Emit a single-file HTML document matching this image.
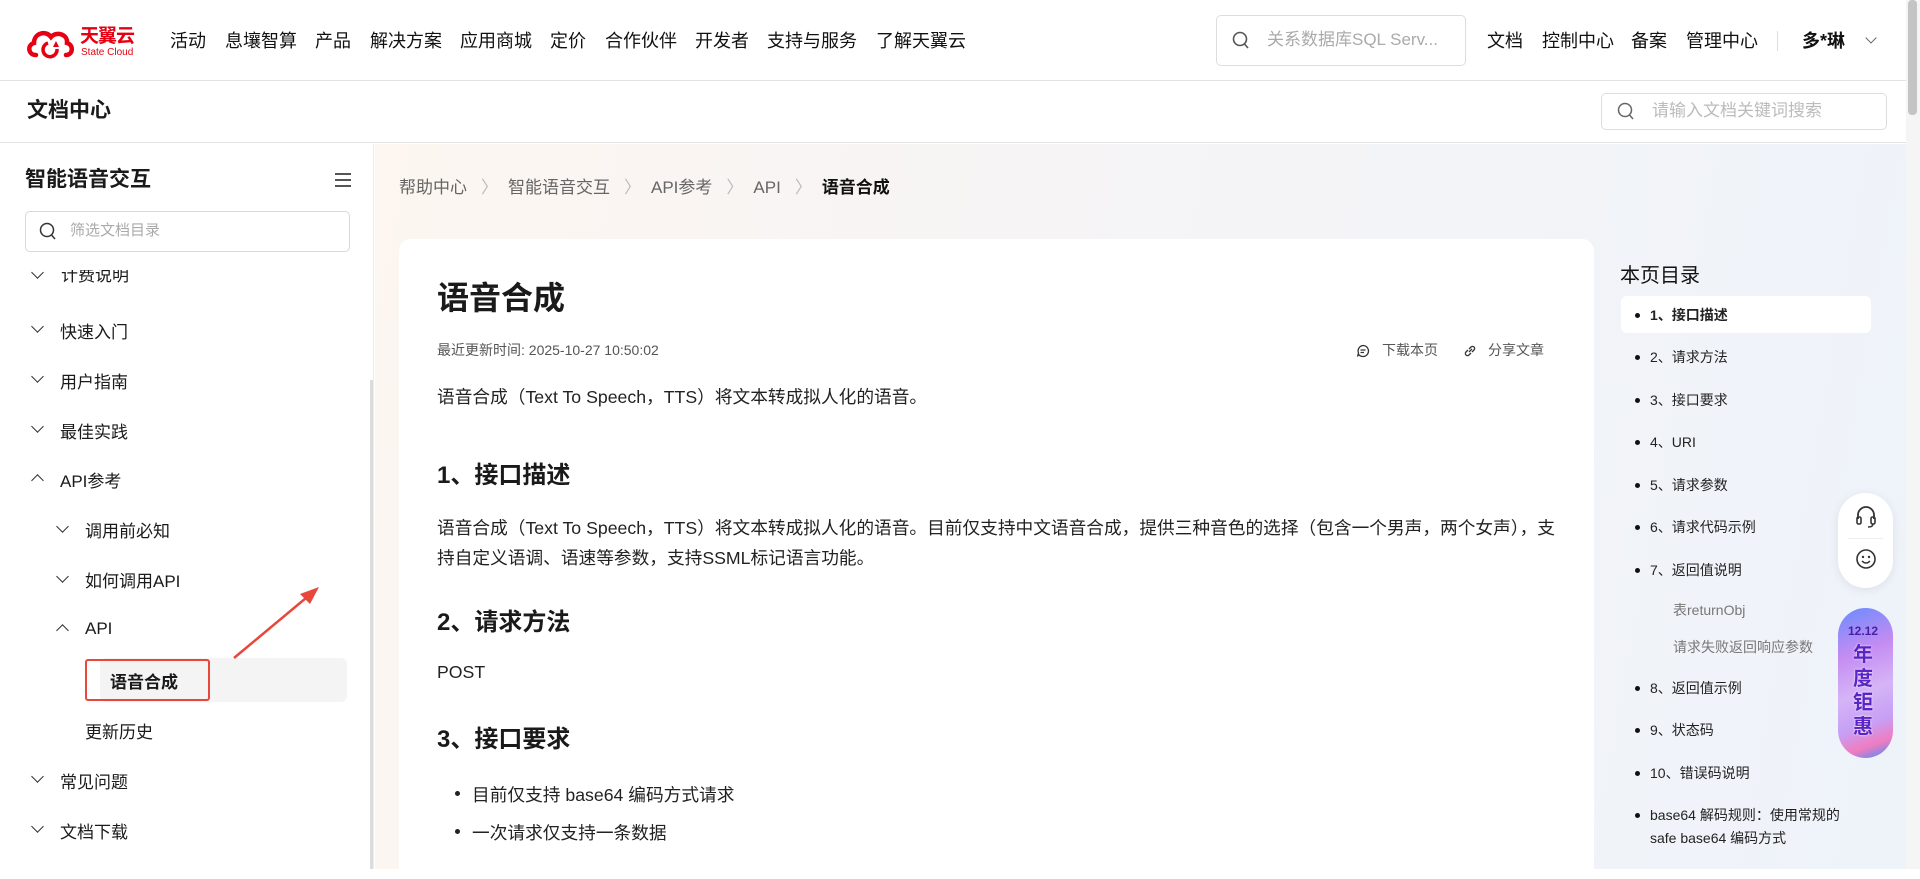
<!DOCTYPE html>
<html><head><meta charset="utf-8">
<style>
*{margin:0;padding:0;box-sizing:border-box}
body{width:1920px;height:869px;overflow:hidden;position:relative;font-family:"Liberation Sans","Noto Sans CJK SC",sans-serif;color:#1a1a1a;background:#fff}
.a{position:absolute;white-space:nowrap}
.nav{top:27px;font-size:18px;color:#111}
.sb{font-size:17px;color:#1a1a1a}
.chev{position:absolute;width:9px;height:9px;border-right:1.5px solid #333;border-bottom:1.5px solid #333}
.dn{transform:rotate(45deg)}
.up{transform:rotate(-135deg)}
.toc{font-size:14px;color:#222}
.toc::before{content:"";position:absolute;left:-15px;top:8px;width:5px;height:5px;border-radius:50%;background:#111}
.p{font-size:17.7px;color:#222}
h2{position:absolute;font-size:24px;font-weight:bold;color:#1a1a1a;white-space:nowrap}
</style></head><body>
<!-- header -->
<div class="a" style="left:0;top:0;width:1920px;height:81px;border-bottom:1px solid #e2e2e2;background:#fff"></div>
<svg class="a" style="left:26px;top:27px" width="50" height="32" viewBox="0 0 50 32"><path d="M10 28 C2 28 1 18 8 16 C8 6 20 3 25 10 C30 4 42 7 41 16 C48 18 47 28 40 28" fill="none" stroke="#e60012" stroke-width="4.5" stroke-linecap="round"/><path d="M22 16 A7 7 0 1 0 31 22" fill="none" stroke="#e60012" stroke-width="3.5"/><path d="M30 14 l3 6 l-6 0z" fill="#e60012"/></svg>
<div class="a" style="left:80px;top:26px;font-size:19px;line-height:22px;font-weight:bold;color:#e60012;letter-spacing:-1px">天翼云</div>
<div class="a" style="left:81px;top:47px;font-size:10px;line-height:11px;color:#e60012">State Cloud</div>
<div class="a nav" style="left:170px">活动</div>
<div class="a nav" style="left:225px">息壤智算</div>
<div class="a nav" style="left:315px">产品</div>
<div class="a nav" style="left:370px">解决方案</div>
<div class="a nav" style="left:460px">应用商城</div>
<div class="a nav" style="left:550px">定价</div>
<div class="a nav" style="left:605px">合作伙伴</div>
<div class="a nav" style="left:695px">开发者</div>
<div class="a nav" style="left:767px">支持与服务</div>
<div class="a nav" style="left:876px">了解天翼云</div>
<div class="a" style="left:1216px;top:15px;width:250px;height:51px;border:1px solid #ddd;border-radius:5px"></div>
<svg class="a" style="left:1232px;top:31px" width="18" height="20"><circle cx="8" cy="8" r="6.5" fill="none" stroke="#555" stroke-width="1.6"/><path d="M12.5 13 L16 17" stroke="#555" stroke-width="1.6"/></svg>
<div class="a" style="left:1267px;top:30px;font-size:17px;line-height:20px;color:#aaa">关系数据库SQL Serv...</div>
<div class="a nav" style="left:1487px">文档</div>
<div class="a nav" style="left:1542px">控制中心</div>
<div class="a nav" style="left:1631px">备案</div>
<div class="a nav" style="left:1686px">管理中心</div>
<div class="a" style="left:1777px;top:31px;width:1px;height:20px;background:#ddd"></div>
<div class="a nav" style="left:1802px;font-weight:bold">多*琳</div>
<div class="chev dn" style="left:1867px;top:34px;width:8px;height:8px;border-color:#666;border-width:1.2px"></div>
<div class="a" style="left:1906px;top:0;width:14px;height:869px;background:#f5f5f5"></div>
<div class="a" style="left:1908px;top:0;width:9px;height:115px;background:#c4c4c4;border-radius:4px"></div>
<!-- subbar -->
<div class="a" style="left:0;top:81px;width:1906px;height:62px;border-bottom:1px solid #e2e2e2;background:#fff"></div>
<div class="a" style="left:27px;top:99px;font-size:21px;line-height:24px;font-weight:bold">文档中心</div>
<div class="a" style="left:1601px;top:93px;width:286px;height:37px;border:1px solid #ddd;border-radius:5px"></div>
<svg class="a" style="left:1617px;top:102px" width="18" height="20"><circle cx="8" cy="8" r="6.5" fill="none" stroke="#666" stroke-width="1.5"/><path d="M12.5 13 L16 17" stroke="#666" stroke-width="1.5"/></svg>
<div class="a" style="left:1652px;top:101px;font-size:17px;line-height:20px;color:#bbb">请输入文档关键词搜索</div>
<!-- main bg -->
<div class="a" style="left:375px;top:144px;width:1531px;height:725px;background:linear-gradient(100deg,#fdf6f1 0%,#f6f4f5 40%,#eef3fa 100%)"></div>
<!-- sidebar -->
<div class="a" style="left:0;top:144px;width:374px;height:725px;background:#fff;border-right:1px solid #ececec"></div>
<div class="a" style="left:370px;top:380px;width:3px;height:489px;background:#dcdcdc"></div>
<div class="a" style="left:25px;top:168px;font-size:21px;line-height:24px;font-weight:bold">智能语音交互</div>
<div class="a" style="left:335px;top:173px;width:16px;height:2px;background:#555;box-shadow:0 6px 0 #555,0 12px 0 #555"></div>
<div class="a" style="left:25px;top:211px;width:325px;height:41px;border:1px solid #d8d8d8;border-radius:5px"></div>
<svg class="a" style="left:39px;top:222px" width="18" height="20"><circle cx="8" cy="8" r="6.5" fill="none" stroke="#333" stroke-width="1.5"/><path d="M12.5 13 L16 17" stroke="#333" stroke-width="1.5"/></svg>
<div class="a" style="left:70px;top:222px;font-size:15px;line-height:18px;color:#aaa">筛选文档目录</div>
<div class="a" style="left:0;top:270px;width:370px;height:22px;overflow:hidden"><div class="a sb" style="left:61px;top:-4px;line-height:20px">计费说明</div><div class="chev dn" style="left:33px;top:-2px"></div></div>
<div class="chev dn" style="left:33px;top:322px"></div><div class="a sb" style="left:60px;top:318px">快速入门</div>
<div class="chev dn" style="left:33px;top:372px"></div><div class="a sb" style="left:60px;top:368px">用户指南</div>
<div class="chev dn" style="left:33px;top:422px"></div><div class="a sb" style="left:60px;top:418px">最佳实践</div>
<div class="chev up" style="left:33px;top:476px"></div><div class="a sb" style="left:60px;top:467px">API参考</div>
<div class="chev dn" style="left:58px;top:522px"></div><div class="a sb" style="left:85px;top:517px">调用前必知</div>
<div class="chev dn" style="left:58px;top:572px"></div><div class="a sb" style="left:85px;top:567px">如何调用API</div>
<div class="chev up" style="left:58px;top:626px"></div><div class="a sb" style="left:85px;top:619px">API</div>
<div class="a" style="left:100px;top:658px;width:247px;height:44px;background:#f4f4f4;border-radius:6px"></div>
<div class="a" style="left:85px;top:659px;width:125px;height:42px;border:2px solid #e8473c;border-radius:3px"></div>
<div class="a sb" style="left:110px;top:668px;font-weight:bold">语音合成</div>
<div class="a sb" style="left:85px;top:718px">更新历史</div>
<div class="chev dn" style="left:33px;top:772px"></div><div class="a sb" style="left:60px;top:768px">常见问题</div>
<div class="chev dn" style="left:33px;top:822px"></div><div class="a sb" style="left:60px;top:818px">文档下载</div>
<svg class="a" style="left:220px;top:575px" width="110" height="95"><path d="M14 83 L92 18" stroke="#e8473c" stroke-width="2.5"/><path d="M99 12 L80 19 L90 29 Z" fill="#e8473c"/></svg>
<!-- breadcrumb -->
<div class="a" style="left:399px;top:178px;font-size:17px;line-height:20px;color:#666">帮助中心<span style="color:#bbb;margin:0 10px 0 14px">〉</span>智能语音交互<span style="color:#bbb;margin:0 10px 0 14px">〉</span>API参考<span style="color:#bbb;margin:0 10px 0 14px">〉</span>API<span style="color:#bbb;margin:0 10px 0 14px">〉</span><b style="color:#111">语音合成</b></div>
<!-- card -->
<div class="a" style="left:399px;top:239px;width:1195px;height:640px;background:#fff;border-radius:12px"></div>
<div class="a" style="left:437px;top:279px;font-size:32px;line-height:38px;font-weight:bold">语音合成</div>
<div class="a" style="left:437px;top:342px;font-size:14px;line-height:17px;color:#555">最近更新时间: 2025-10-27 10:50:02</div>
<svg class="a" style="left:1356px;top:344px" width="14" height="14"><path d="M7 1.5a5.5 5.5 0 1 1-4.5 8.7L1.5 12.5 2.5 9A5.5 5.5 0 0 1 7 1.5z M4.5 6h5 M4.5 8.5h3.5" fill="none" stroke="#333" stroke-width="1.3"/></svg>
<div class="a" style="left:1382px;top:342px;font-size:14px;line-height:17px;color:#555">下载本页</div>
<svg class="a" style="left:1463px;top:344px" width="14" height="14"><path d="M6 8l3-3 M5 6L3 8a2 2 0 0 0 3 3l2-2 M9 8l2-2a2 2 0 0 0-3-3L6 5" fill="none" stroke="#333" stroke-width="1.3"/></svg>
<div class="a" style="left:1488px;top:342px;font-size:14px;line-height:17px;color:#555">分享文章</div>
<div class="a p" style="left:437px;top:383px">语音合成（Text To Speech，TTS）将文本转成拟人化的语音。</div>
<h2 style="left:437px;top:455px">1、接口描述</h2>
<div class="a p" style="left:437px;top:514px">语音合成（Text To Speech，TTS）将文本转成拟人化的语音。目前仅支持中文语音合成，提供三种音色的选择（包含一个男声，两个女声），支</div>
<div class="a p" style="left:437px;top:544px">持自定义语调、语速等参数，支持SSML标记语言功能。</div>
<h2 style="left:437px;top:602px">2、请求方法</h2>
<div class="a p" style="left:437px;top:662px">POST</div>
<h2 style="left:437px;top:719px">3、接口要求</h2>
<div class="a" style="left:455px;top:791px;width:5px;height:5px;border-radius:50%;background:#222"></div>
<div class="a p" style="left:472px;top:781px">目前仅支持 base64 编码方式请求</div>
<div class="a" style="left:455px;top:829px;width:5px;height:5px;border-radius:50%;background:#222"></div>
<div class="a p" style="left:472px;top:819px">一次请求仅支持一条数据</div>
<!-- toc -->
<div class="a" style="left:1620px;top:259px;font-size:20px;color:#111">本页目录</div>
<div class="a" style="left:1621px;top:296px;width:250px;height:37px;background:#fff;border-radius:6px"></div>
<div class="a toc" style="left:1650px;top:305px;font-weight:bold">1、接口描述</div>
<div class="a toc" style="left:1650px;top:347px">2、请求方法</div>
<div class="a toc" style="left:1650px;top:390px">3、接口要求</div>
<div class="a toc" style="left:1650px;top:432px">4、URI</div>
<div class="a toc" style="left:1650px;top:475px">5、请求参数</div>
<div class="a toc" style="left:1650px;top:517px">6、请求代码示例</div>
<div class="a toc" style="left:1650px;top:560px">7、返回值说明</div>
<div class="a" style="left:1673px;top:600px;font-size:14px;color:#777">表returnObj</div>
<div class="a" style="left:1673px;top:637px;font-size:14px;color:#777">请求失败返回响应参数</div>
<div class="a toc" style="left:1650px;top:678px">8、返回值示例</div>
<div class="a toc" style="left:1650px;top:720px">9、状态码</div>
<div class="a toc" style="left:1650px;top:763px">10、错误码说明</div>
<div class="a toc" style="left:1650px;top:805px">base64 解码规则：使用常规的</div>
<div class="a" style="left:1650px;top:828px;font-size:14px;color:#222">safe base64 编码方式</div>
<!-- float widgets -->
<div class="a" style="left:1838px;top:493px;width:55px;height:95px;background:#fff;border-radius:28px;box-shadow:0 2px 10px rgba(0,0,0,.08)"></div>
<svg class="a" style="left:1855px;top:505px" width="22" height="24"><path d="M3 14V10a8 8 0 0 1 16 0v4" fill="none" stroke="#333" stroke-width="1.8"/><rect x="2" y="12" width="4" height="7" rx="1.5" fill="none" stroke="#333" stroke-width="1.6"/><rect x="16" y="12" width="4" height="7" rx="1.5" fill="none" stroke="#333" stroke-width="1.6"/><path d="M18 19q0 3-5 3" fill="none" stroke="#333" stroke-width="1.5"/></svg>
<div class="a" style="left:1848px;top:538px;width:35px;height:1px;background:#eee"></div>
<svg class="a" style="left:1855px;top:548px" width="22" height="22"><circle cx="11" cy="11" r="9" fill="none" stroke="#333" stroke-width="1.6"/><circle cx="8" cy="9" r="1.2" fill="#333"/><circle cx="14" cy="9" r="1.2" fill="#333"/><path d="M7 13q4 4 8 0" fill="none" stroke="#333" stroke-width="1.5"/></svg>
<div class="a" style="left:1838px;top:608px;width:55px;height:150px;border-radius:28px;background:linear-gradient(160deg,#6a8cff 0%,#c48cf2 30%,#d5b4f6 55%,#c79ff5 75%,#f07cc0 88%,#3e8dff 100%)"></div>
<div class="a" style="left:1848px;top:624px;font-size:12px;font-weight:bold;color:#4a1fa8">12.12</div>
<div class="a" style="left:1853px;top:643px;font-size:20px;font-weight:bold;color:#5a25c4;line-height:24px;white-space:normal;width:26px;text-shadow:0 0 2px #fff">年度钜惠</div>
</body></html>
